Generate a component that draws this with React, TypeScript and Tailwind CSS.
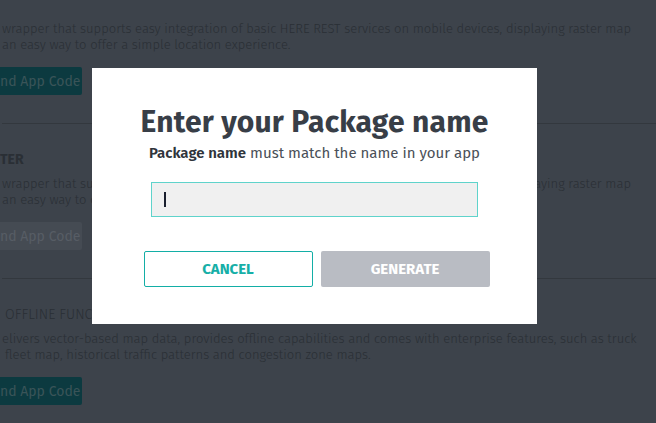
import React from "react";

const bgText = "text-[#2a2f35]";

function Section({
  heading,
  headingClass,
  line1,
  line2,
  line2Class,
  buttonClass,
  buttonText,
  first,
}: {
  heading?: string;
  headingClass?: string;
  line1: string;
  line2: string;
  line2Class?: string;
  buttonClass: string;
  buttonText: string;
  first?: boolean;
}) {
  return (
    <div className={`border-b border-[#33383e] ${first ? "pt-[21px]" : "pt-[26px]"} pb-[28px]`}>
      {heading && (
        <div className={`h-[20px] leading-[20px] text-[14px] ${headingClass}`}>{heading}</div>
      )}
      <div className={`${heading ? "mt-[6px]" : ""} text-[13px] leading-[16px] font-light ${bgText} whitespace-nowrap`}>
        <div>{line1}</div>
        <div className={line2Class}>{line2}</div>
      </div>
      <div className={`mt-[14px] h-[28px] w-[82px] rounded-r-[2px] flex items-center text-[14px] ${buttonClass}`}>
        {buttonText}
      </div>
    </div>
  );
}

export default function App() {
  return (
    <div
      className="relative w-[656px] h-[423px] overflow-hidden bg-[#3d434b]"
      style={{ fontFamily: "'Fira Sans', Lato, 'Noto Sans', sans-serif" }}
    >
      <div className="pl-[2px]">
        <Section
          first
          line1="wrapper that supports easy integration of basic HERE REST services on mobile devices, displaying raster map"
          line2="an easy way to offer a simple location experience."
          buttonClass="bg-[#0c3a40] text-[#3a5458] -ml-[2px]"
          buttonText="nd App Code"
        />
        <Section
          heading="TER"
          headingClass={`font-bold ${bgText} -ml-[2px]`}
          line1="wrapper that supports easy integration of basic HERE REST services on mobile devices, displaying raster map"
          line2="an easy way to offer a simple location experience."
          buttonClass="bg-[#454b53] text-[#575d65] -ml-[2px]"
          buttonText="nd App Code"
        />
        <Section
          heading="OFFLINE FUNCTIONALITY"
          headingClass={`font-light ${bgText} pl-[3px]`}
          line1="elivers vector-based map data, provides offline capabilities and comes with enterprise features, such as truck"
          line2="fleet map, historical traffic patterns and congestion zone maps."
          line2Class="pl-[3px]"
          buttonClass="bg-[#0c3a40] text-[#3a5458] -ml-[2px]"
          buttonText="nd App Code"
        />
      </div>

      <div className="absolute left-[92px] top-[68px] w-[445px] h-[256px] bg-white flex flex-col items-center">
        <h1 className="mt-[36px] text-[30px] leading-[36px] font-bold text-[#383e47] tracking-[0.2px]">
          Enter your Package name
        </h1>
        <p className="mt-[3px] text-[15px] leading-[20px] text-[#4a5058]">
          <span className="font-semibold text-[#2f343b]">Package name</span> must match the name in your app
        </p>
        <div className="mt-[19px] w-[327px] h-[35px] bg-[#f0f0f0] border border-[#5fd3cb] flex items-center pl-[12px]">
          <div className="w-[1.5px] h-[15px] bg-[#1a1f2e]" />
        </div>
        <div className="mt-[34px] ml-[4px] flex gap-[8px]">
          <button className="w-[169px] h-[36px] border border-[#13aea6] rounded-[2px] text-[15px] font-bold text-[#17afa7] bg-white">
            CANCEL
          </button>
          <button className="w-[169px] h-[36px] rounded-[2px] text-[15px] font-bold text-white bg-[#b9bcc3]">
            GENERATE
          </button>
        </div>
      </div>
    </div>
  );
}
